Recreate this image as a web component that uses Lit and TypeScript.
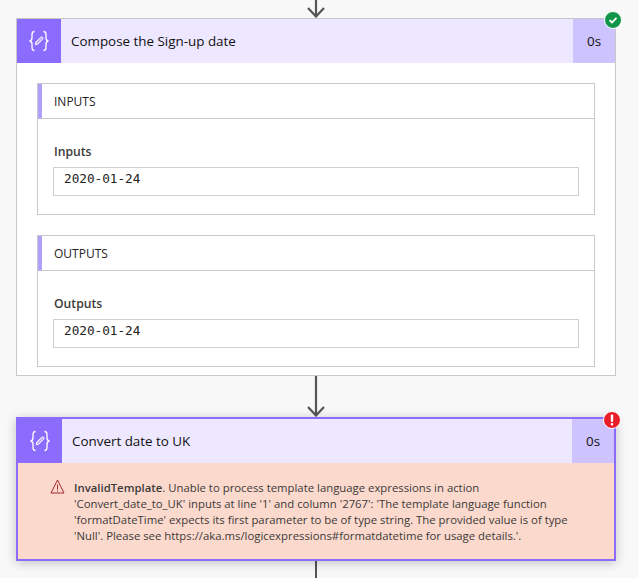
import { LitElement, html, css } from "lit";
import { customElement } from "lit/decorators.js";

const composeIcon = html`<svg class="ci" width="24" height="24" viewBox="0 0 24 24" fill="none" stroke="#fff" stroke-width="1.3">
  <path d="M7.5 2.5C5.5 2.5 5 3.5 5 5.5V9C5 10.8 4.4 11.6 2.6 12C4.4 12.4 5 13.2 5 15V18.5C5 20.5 5.5 21.5 7.5 21.5"/>
  <path d="M16.5 2.5C18.5 2.5 19 3.5 19 5.5V9C19 10.8 19.6 11.6 21.4 12C19.6 12.4 19 13.2 19 15V18.5C19 20.5 18.5 21.5 16.5 21.5"/>
  <path d="M8.2 15.8L8.9 13L13.6 8.3C14.2 7.7 15 7.7 15.6 8.3C16.2 8.9 16.2 9.7 15.6 10.3L10.9 15Z" fill="#fff" fill-opacity=".45" stroke-width="1"/>
</svg>`;

const downArrow = (h: number) => html`<svg class="arrow" width="24" height="${h}" viewBox="0 0 24 ${h}" fill="none" stroke="#555" stroke-width="2.2">
  <path d="M12 0V${h - 1}"/>
  <path d="M4 ${h - 10}L12 ${h - 1.5}L20 ${h - 10}"/>
</svg>`;

@customElement("app-root")
export class AppRoot extends LitElement {
  static styles = css`
    :host {
      display: block;
      width: 638px;
      height: 578px;
      overflow: hidden;
      background: #f8f8f8;
      font-family: "Open Sans", "Noto Sans", sans-serif;
      color: #252423;
    }
    .flow {
      display: flex;
      flex-direction: column;
      align-items: flex-start;
      padding-left: 16px;
      width: 600px;
    }
    .link {
      width: 600px;
      display: flex;
      justify-content: center;
    }
    .arrow { display: block; }
    .card {
      position: relative;
      box-sizing: border-box;
      width: 600px;
      background: #fff;
      border: 1px solid #c8c8c8;
    }
    .card.err {
      border: 2px solid #8c6cff;
      box-shadow: 0 2px 10px rgba(0, 0, 0, 0.22);
    }
    .head {
      display: flex;
      align-items: stretch;
      height: 44px;
      background: #ede7ff;
    }
    .icon {
      width: 44px;
      flex: none;
      background: #8c6cff;
      display: flex;
      align-items: center;
      justify-content: center;
    }
    .title {
      flex: 1;
      display: flex;
      align-items: center;
      padding-left: 10px;
      font-size: 13.4px;
      color: #111;
    }
    .time {
      width: 42px;
      flex: none;
      background: #cdc3ff;
      display: flex;
      align-items: center;
      justify-content: center;
      font-size: 13.4px;
      color: #111;
    }
    .body {
      display: flex;
      flex-direction: column;
      gap: 20px;
      padding: 20px 20px 8px;
    }
    .sec {
      box-sizing: border-box;
      height: 132px;
      border: 1px solid #c8c8c8;
    }
    .sec-head {
      box-sizing: border-box;
      height: 35px;
      border-bottom: 1px solid #c8c8c8;
      border-left: 4px solid #b0a0ff;
      padding-left: 12px;
      display: flex;
      align-items: center;
      font-size: 12px;
      color: #252423;
    }
    .sec-body {
      padding: 24px 15px 0;
    }
    .label {
      font-size: 12.2px;
      font-weight: 600;
      line-height: 17px;
      margin: 0 0 7px 1px;
      color: #3b3a39;
    }
    .val {
      box-sizing: border-box;
      height: 29px;
      border: 1px solid #cfcfcf;
      padding: 0 0 6px 10px;
      display: flex;
      align-items: center;
      font-family: "DejaVu Sans Mono", "Liberation Mono", monospace;
      font-size: 12.7px;
      color: #222;
    }
    .error {
      box-sizing: border-box;
      height: 96px;
      background: #fcd9cd;
      display: flex;
      gap: 9px;
      padding: 16px 16px 0 32px;
      font-size: 11.35px;
      line-height: 16px;
      color: #3b3a39;
      white-space: nowrap;
    }
    .error svg { flex: none; }
    .msg { padding-top: 1px; }
    .error b { font-weight: 600; }
    .badge {
      position: absolute;
      width: 16px;
      height: 16px;
      border: 1px solid #fff;
      border-radius: 50%;
      display: flex;
      align-items: center;
      justify-content: center;
    }
    .ok { right: -7px; top: -8px; background: #0f9648; }
    .bad { right: -7px; top: -8px; background: #e81e2a; }
  `;

  section(name: string, label: string, value: string) {
    return html`<div class="sec">
      <div class="sec-head">${name}</div>
      <div class="sec-body">
        <div class="label">${label}</div>
        <div class="val">${value}</div>
      </div>
    </div>`;
  }

  render() {
    return html`<div class="flow">
      <div class="link">${downArrow(18)}</div>
      <div class="card">
        <div class="head">
          <div class="icon">${composeIcon}</div>
          <div class="title">Compose the Sign-up date</div>
          <div class="time">0s</div>
        </div>
        <div class="body">
          ${this.section("INPUTS", "Inputs", "2020-01-24")}
          ${this.section("OUTPUTS", "Outputs", "2020-01-24")}
        </div>
        <div class="badge ok">
          <svg width="10" height="10" viewBox="0 0 10 10" fill="none" stroke="#fff" stroke-width="1.8"><path d="M1.5 5.2L4 7.5L8.5 2.8"/></svg>
        </div>
      </div>
      <div class="link">${downArrow(41)}</div>
      <div class="card err">
        <div class="head">
          <div class="icon">${composeIcon}</div>
          <div class="title">Convert date to UK</div>
          <div class="time">0s</div>
        </div>
        <div class="error">
          <svg width="15" height="15" viewBox="0 0 15 15" fill="none" stroke="#a4262c" stroke-width="1">
            <path d="M7.5 1L14 14H1Z"/>
            <path d="M7.5 5.5V10.5M7.5 11.5V12.5"/>
          </svg>
          <div class="msg">
            <div><b>InvalidTemplate</b>. Unable to process template language expressions in action</div>
            <div>'Convert_date_to_UK' inputs at line '1' and column '2767': 'The template language function</div>
            <div>'formatDateTime' expects its first parameter to be of type string. The provided value is of type</div>
            <div>'Null'. Please see https://aka.ms/logicexpressions#formatdatetime for usage details.'.</div>
          </div>
        </div>
        <div class="badge bad">
          <svg width="10" height="12" viewBox="0 0 10 12" fill="#fff"><rect x="3.8" y="0.5" width="2.4" height="7.5" rx="1"/><rect x="3.8" y="9" width="2.4" height="2.5" rx="1"/></svg>
        </div>
      </div>
      <div class="link">
        <svg class="arrow" width="24" height="20" fill="none" stroke="#555" stroke-width="2"><path d="M12 0V20"/></svg>
      </div>
    </div>`;
  }
}
